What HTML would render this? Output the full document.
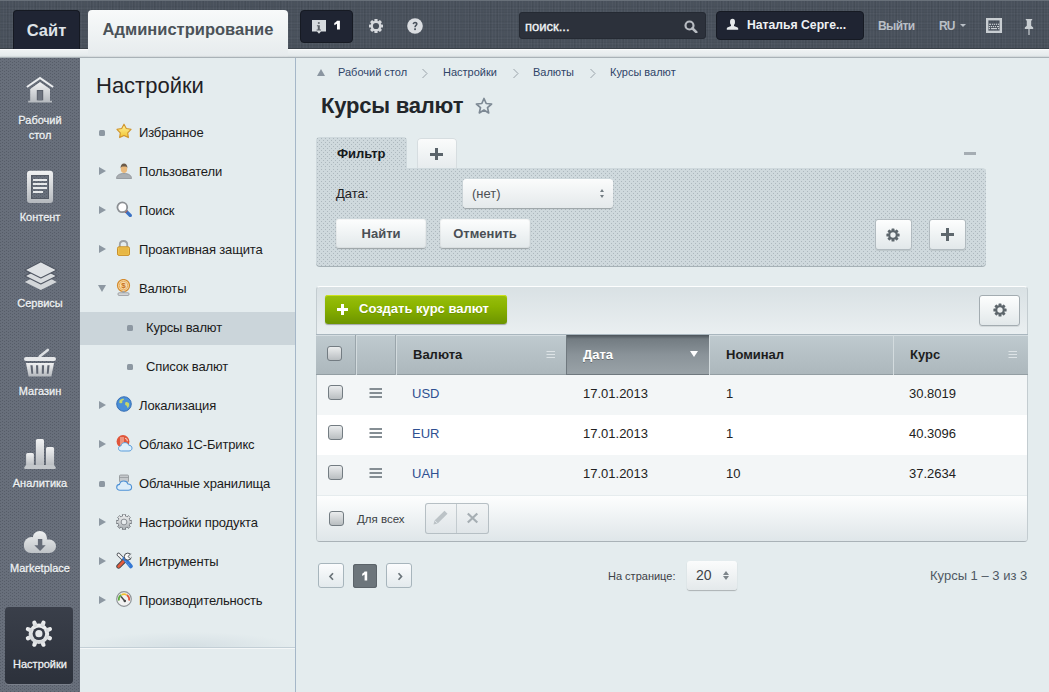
<!DOCTYPE html>
<html><head><meta charset="utf-8">
<style>
*{margin:0;padding:0;box-sizing:border-box}
html,body{width:1049px;height:692px;overflow:hidden;font-family:"Liberation Sans",sans-serif;background:#e4ebed}
.a{position:absolute}
#top{left:0;top:0;width:1049px;height:49px;background:#49515c;
 background-image:repeating-linear-gradient(90deg,rgba(255,255,255,.03) 0 1px,transparent 1px 3px),repeating-linear-gradient(90deg,rgba(0,0,0,.05) 0 1px,transparent 1px 7px),repeating-linear-gradient(0deg,rgba(0,0,0,.04) 0 1px,transparent 1px 3px),repeating-linear-gradient(0deg,rgba(255,255,255,.025) 0 1px,transparent 1px 5px);
 border-top:1px solid #687079;box-shadow:inset 0 -1px 0 #3a4149}
#strip{left:0;top:49px;width:1049px;height:8px;background:linear-gradient(#fafbfc 0 1px,#eef2f3 1px,#e3e9eb)}
.tabsite{left:13px;top:10px;width:67px;height:39px;background:#1f2433;border:1px solid #151922;border-bottom:none;border-radius:4px 4px 0 0;color:#dfe3e8;font-weight:bold;font-size:16.5px;text-align:center;line-height:39px}
.tabadm{left:88px;top:10px;width:200px;height:47px;background:linear-gradient(#f8fafa,#e6ebed);border-radius:4px 4px 0 0;color:#4b5258;font-weight:bold;font-size:16.5px;text-align:center;line-height:39px}
.dbtn{background:#1f2432;border-radius:4px;border:1px solid #161a23}
#side{left:0;top:58px;width:80px;height:634px;background:#686f7b;
 background-image:radial-gradient(circle at 2.5px .5px,rgba(40,45,55,.28) .6px,transparent .9px),radial-gradient(circle at .5px 1.5px,rgba(40,45,55,.28) .6px,transparent .9px);background-size:4px 3px}
#menu{left:80px;top:58px;width:216px;height:634px;background:#e4ecee;border-right:1px solid #a5b7c8}
#main{left:296px;top:58px;width:753px;height:634px;background:#e4ecee}
.si{position:absolute;left:0;width:80px;text-align:center;color:#eef1f3;font-size:11px;line-height:15px;-webkit-text-stroke:.3px #eef1f3;text-shadow:0 1px 1px rgba(0,0,0,.25)}
.mi{position:absolute;left:139px;font-size:13px;color:#1b1b1b;white-space:nowrap;letter-spacing:-.15px}
.bul{position:absolute;left:99px;width:6px;height:6px;border-radius:1.5px;background:#8d98a2}
.arr{position:absolute;left:99px;width:0;height:0;border-left:7px solid #8d98a2;border-top:4.5px solid transparent;border-bottom:4.5px solid transparent}
.arrd{position:absolute;left:98px;width:0;height:0;border-top:7px solid #8d98a2;border-left:4.5px solid transparent;border-right:4.5px solid transparent}
.bc{position:absolute;top:65px;font-size:11px;color:#2f4468;white-space:nowrap}
.lbtn{position:absolute;background:linear-gradient(#fdfefe,#e2e8ea);border-radius:3px;box-shadow:0 1px 1px rgba(0,0,0,.25),inset 0 0 0 1px rgba(0,0,0,.04);font-weight:bold;font-size:13px;color:#4a4f55;text-align:center}
.cb{position:absolute;width:15px;height:15px;border-radius:3px;border:1px solid #737c82;background:linear-gradient(#ebedee,#b9bec1)}
.cell{position:absolute;font-size:13px;color:#222;white-space:nowrap}
.hdr{position:absolute;font-size:13px;font-weight:bold;color:#1d1d1d;white-space:nowrap}
</style></head><body>
<div id="top" class="a"></div>
<div id="strip" class="a"></div>
<div class="a tabsite">Сайт</div>
<div class="a tabadm">Администрирование</div>
<div class="a" style="left:0;top:57px;width:1049px;height:1px;background:#a9b2b7;box-shadow:0 -1px 1px rgba(0,0,0,.08)"></div>
<!-- notifications -->
<div class="a dbtn" style="left:300px;top:10px;width:53px;height:33px"></div>
<svg class="a" style="left:311px;top:19px" width="16" height="16" viewBox="0 0 16 16"><path d="M1 1h14v11.5H10l-2 2.3-2-2.3H1z" fill="#d6dade"/><rect x="6.9" y="3.2" width="1.8" height="1.6" fill="#5b6067"/><path d="M5.9 6.2h2.9v4.3h1.2v1.1H5.6v-1.1h1.2V7.3h-.9z" fill="#5b6067"/></svg>
<svg class="a" style="left:333px;top:20px" width="8" height="10" viewBox="0 0 8 10"><path d="M4 .8h2.9v8.8H4V3.8c-.8.7-1.6 1.1-2.7 1.4V3C2.6 2.5 3.5 1.7 4 .8z" fill="#fff"/></svg>
<!-- gear -->
<svg class="a" style="left:368px;top:18px" width="16" height="16" viewBox="-8 -8 16 16"><g fill="#d6d9dd"><circle r="5.3"/><g id="tt"><rect x="-1.6" y="-7" width="3.2" height="3" rx=".6"/></g><use href="#tt" transform="rotate(45)"/><use href="#tt" transform="rotate(90)"/><use href="#tt" transform="rotate(135)"/><use href="#tt" transform="rotate(180)"/><use href="#tt" transform="rotate(225)"/><use href="#tt" transform="rotate(270)"/><use href="#tt" transform="rotate(315)"/></g><circle r="3.1" fill="#49515c"/></svg>
<!-- help -->
<svg class="a" style="left:407px;top:18px" width="16" height="16" viewBox="0 0 16 16"><circle cx="8" cy="8" r="7.8" fill="#dadde1"/><path d="M5.6 6.1c0-1.5 1.1-2.4 2.5-2.4s2.5.9 2.5 2.2c0 1.6-1.8 1.8-1.8 3.3H7.3c0-1.9 1.6-2.1 1.6-3.1 0-.5-.3-.9-.9-.9-.6 0-.9.4-.9 1z" fill="#49515c"/><rect x="7.2" y="10.3" width="1.7" height="1.8" fill="#49515c"/></svg>
<!-- search -->
<div class="a" style="left:519px;top:12px;width:187px;height:27px;background:#2c313b;border-radius:3px;border:1px solid #252a33"></div>
<div class="a" style="left:525px;top:19px;font-size:13px;line-height:15px;color:#f2f4f6;-webkit-text-stroke:.35px #f2f4f6">поиск...</div>
<svg class="a" style="left:684px;top:20px" width="14" height="13" viewBox="0 0 14 13"><circle cx="5.5" cy="5.5" r="4" fill="none" stroke="#b8bcc2" stroke-width="2.2"/><path d="M8.3 8.3l4 3.8" stroke="#b8bcc2" stroke-width="2.6" stroke-linecap="round"/></svg>
<!-- user -->
<div class="a dbtn" style="left:716px;top:11px;width:148px;height:29px"></div>
<svg class="a" style="left:726px;top:18px" width="13" height="13" viewBox="0 0 13 13"><ellipse cx="6.5" cy="3.9" rx="2.5" ry="3.2" fill="#e6e9eb"/><path d="M5 6h3v2l3.6 1.6c.4.2.6.5.6.9v1.3H.8v-1.3c0-.4.2-.7.6-.9L5 8z" fill="#e6e9eb"/></svg>
<div class="a" style="left:747px;top:18px;font-size:12.2px;line-height:14px;color:#eef1f4;font-weight:bold">Наталья Серге...</div>
<div class="a" style="left:878px;top:19px;font-size:12px;line-height:14px;color:#b9bfc6;font-weight:bold;letter-spacing:-0.6px">Выйти</div>
<div class="a" style="left:939px;top:19px;font-size:12px;line-height:14px;color:#b9bfc6;font-weight:bold;letter-spacing:-0.8px">RU</div>
<div class="a" style="left:960px;top:24px;width:0;height:0;border-top:3px solid #b9bfc6;border-left:3px solid transparent;border-right:3px solid transparent"></div>
<svg class="a" style="left:986px;top:18px" width="16" height="15" viewBox="0 0 16 15"><rect x="1.2" y="1.2" width="13.6" height="12.6" fill="none" stroke="#c9ced2" stroke-width="2.4"/><g fill="#c9ced2"><rect x="3.1" y="5.7" width="2" height="1.2"/><rect x="6" y="5.7" width="1.2" height="1.2"/><rect x="8" y="5.7" width="1.2" height="1.2"/><rect x="10" y="5.7" width="1.2" height="1.2"/><rect x="12" y="5.7" width="1.2" height="1.2"/><rect x="2.8" y="8" width="1.2" height="1.2"/><rect x="4.8" y="8" width="1.2" height="1.2"/><rect x="6.8" y="8" width="1.2" height="1.2"/><rect x="8.8" y="8" width="1.2" height="1.2"/><rect x="11" y="8" width="2" height="1.2"/><rect x="2.8" y="10" width="1.2" height="1.2"/><rect x="5" y="10" width="6" height="1.2"/><rect x="12" y="10" width="1.2" height="1.2"/></g></svg>
<svg class="a" style="left:1024px;top:19px" width="10" height="16" viewBox="0 0 10 16"><path d="M1.8 0h6.4v1L7.2 1.8v5L9.2 8.6V10H.8V8.6l2-1.8v-5L1.8 1z" fill="#c9ced2"/><rect x="4.4" y="10" width="1.2" height="6" fill="#c9ced2"/></svg>
<div id="side" class="a"></div>
<svg width="0" height="0" style="position:absolute"><defs>
<linearGradient id="ig" x1="0" y1="0" x2="0" y2="1"><stop offset="0" stop-color="#f1f2f3"/><stop offset="1" stop-color="#b4b8bd"/></linearGradient>
</defs></svg>
<!-- house -->
<svg class="a" style="left:20px;top:70px" width="40" height="40" viewBox="0 0 40 40"><path d="M6.3 16.2L20 6.8l13.7 9.4-1.2 1.6L20 9.3 7.5 17.8z" fill="#eceef0"/><path d="M10.2 19L20 12l10 7v11.8h2v1.8H8.2v-1.8h2z" fill="url(#ig)"/><rect x="16.8" y="20" width="6.4" height="10.3" fill="#5a606b"/><rect x="17.8" y="21" width="4.4" height="9.3" fill="#6d737e"/></svg>
<div class="si" style="top:113px;line-height:15px">Рабочий<br>стол</div>
<!-- content -->
<svg class="a" style="left:20px;top:165px" width="40" height="40" viewBox="0 0 40 40"><path fill-rule="evenodd" d="M10 5.8h20a3 3 0 0 1 3 3V35a3 3 0 0 1-3 3H10a3 3 0 0 1-3-3V8.8a3 3 0 0 1 3-3zM11 10v24h18V10z" fill="url(#ig)"/><rect x="11.5" y="10.5" width="17" height="23" fill="none" stroke="#555b66" stroke-width="1"/><g fill="#e6e8ea"><rect x="13" y="14" width="14" height="2"/><rect x="13" y="18" width="14" height="2"/><rect x="13" y="22" width="14" height="2"/><rect x="13" y="26" width="10" height="2"/></g></svg>
<div class="si" style="top:210px">Контент</div>
<!-- services (layers) -->
<svg class="a" style="left:20px;top:255px" width="40" height="40" viewBox="0 0 40 40"><path d="M4.8 26.9L20.8 18.7 36.9 26.9 20.8 35z" fill="#d3d6d9"/><path d="M4.8 20.9L20.8 12.7 36.9 20.9 20.8 29z" fill="#d9dcdf" stroke="#515763" stroke-width="1.1" stroke-linejoin="round"/><path d="M4.8 14.9L20.8 6.7 36.9 14.9 20.8 23z" fill="#dfe2e5" stroke="#515763" stroke-width="1.1" stroke-linejoin="round"/></svg>
<div class="si" style="top:296px">Сервисы</div>
<!-- basket -->
<svg class="a" style="left:20px;top:342px" width="40" height="40" viewBox="0 0 40 40"><path d="M19.7 14.6L27.8 7.9" stroke="#dde0e3" stroke-width="2.6" stroke-linecap="round"/><rect x="4" y="15" width="32" height="4" rx="2" fill="#e6e8ea"/><path d="M6 21h28l-2.6 13.6H8.6z" fill="url(#ig)"/><g fill="#5f6571"><path d="M10.4 23.3h2.2l.6 8.4h-1.8z"/><path d="M16 23.3h2.2l.1 8.4h-2z"/><path d="M21.9 23.3h2.2l-.3 8.4h-2z"/><path d="M27.4 23.3h2.2l-1 8.4h-1.8z"/></g></svg>
<div class="si" style="top:384px">Магазин</div>
<!-- chart -->
<svg class="a" style="left:20px;top:432px" width="40" height="40" viewBox="0 0 40 40"><rect x="6.1" y="21" width="7.8" height="14" rx="1.6" fill="url(#ig)"/><rect x="15.9" y="6.9" width="8.1" height="28" rx="1.6" fill="url(#ig)"/><rect x="26" y="15" width="8.1" height="20" rx="1.6" fill="url(#ig)"/><path d="M6 33h28l1.8 2.6c.2.8-.2 1.4-1 1.4H5.2c-.8 0-1.2-.6-1-1.4z" fill="#c3c7cb"/></svg>
<div class="si" style="top:476px">Аналитика</div>
<!-- cloud -->
<svg class="a" style="left:20px;top:522px" width="40" height="40" viewBox="0 0 40 40"><defs><linearGradient id="cg" gradientUnits="userSpaceOnUse" x1="0" y1="9" x2="0" y2="31"><stop offset="0" stop-color="#eef0f1"/><stop offset="1" stop-color="#bfc3c7"/></linearGradient></defs><g fill="url(#cg)"><rect x="4" y="17.5" width="32" height="13.5" rx="6.75"/><circle cx="19.8" cy="16.2" r="7.2"/><circle cx="11.6" cy="22.6" r="7.6"/></g><path d="M17.9 17h4.4v6.2h3.4L20.1 29l-5.8-5.8h3.6z" fill="#666c78"/></svg>
<div class="si" style="top:561px">Marketplace</div>
<!-- active settings -->
<div class="a" style="left:5px;top:607px;width:68px;height:77px;border-radius:4px;background:linear-gradient(#3a3f4a,#2c313b);box-shadow:0 1px 0 rgba(255,255,255,.12)"></div>
<svg class="a" style="left:24px;top:619px" width="30" height="30" viewBox="-15 -15 30 30"><defs><g id="gt"><rect x="-2.1" y="-14" width="4.2" height="6.5" rx="2.1"/></g><linearGradient id="gg" x1="0" y1="0" x2="0" y2="1"><stop offset="0" stop-color="#f3f4f5"/><stop offset="1" stop-color="#d2d5d8"/></linearGradient></defs><g fill="url(#gg)" transform="translate(-.1 -.3) rotate(22.5)"><circle r="10.2"/><use href="#gt"/><use href="#gt" transform="rotate(45)"/><use href="#gt" transform="rotate(90)"/><use href="#gt" transform="rotate(135)"/><use href="#gt" transform="rotate(180)"/><use href="#gt" transform="rotate(225)"/><use href="#gt" transform="rotate(270)"/><use href="#gt" transform="rotate(315)"/></g><circle cx="-.1" cy="-.3" r="6.3" fill="#363b47"/><circle cx="-.1" cy="-.3" r="3.6" fill="#e6e8ea"/></svg>
<div class="si" style="top:657px">Настройки</div>
<div id="menu" class="a"></div>
<div class="a" style="left:80px;top:312px;width:215px;height:33px;background:#cbd5da"></div>
<div class="a" style="left:80px;top:632px;width:215px;height:15px;background:radial-gradient(ellipse 50% 100% at 50% 100%,rgba(150,170,185,.2),rgba(150,170,185,0))"></div>
<div class="a" style="left:80px;top:647px;width:215px;height:1px;background:#c3cfd6"></div>
<div class="a" style="left:80px;top:648px;width:215px;height:1px;background:#f4f7f8"></div>
<div class="a" style="left:96px;top:73px;font-size:22px;line-height:26px;color:#1f2226">Настройки</div>

<div class="bul" style="top:130px"></div>
<div class="arr" style="top:167px"></div>
<div class="arr" style="top:206px"></div>
<div class="arr" style="top:245px"></div>
<div class="arrd" style="top:285px"></div>
<div class="bul" style="left:127px;top:325px"></div>
<div class="bul" style="left:127px;top:364px"></div>
<div class="arr" style="top:401px"></div>
<div class="arr" style="top:440px"></div>
<div class="bul" style="top:481px"></div>
<div class="arr" style="top:518px"></div>
<div class="arr" style="top:557px"></div>
<div class="arr" style="top:596px"></div>

<div class="mi" style="top:124.6px">Избранное</div>
<div class="mi" style="top:163.6px">Пользователи</div>
<div class="mi" style="top:202.6px">Поиск</div>
<div class="mi" style="top:241.6px">Проактивная защита</div>
<div class="mi" style="top:280.6px">Валюты</div>
<div class="mi" style="left:146px;top:319.6px">Курсы валют</div>
<div class="mi" style="left:146px;top:358.6px">Список валют</div>
<div class="mi" style="top:397.6px">Локализация</div>
<div class="mi" style="top:436.6px">Облако 1С-Битрикс</div>
<div class="mi" style="top:475.6px">Облачные хранилища</div>
<div class="mi" style="top:514.6px">Настройки продукта</div>
<div class="mi" style="top:553.6px">Инструменты</div>
<div class="mi" style="top:592.6px">Производительность</div>

<!-- menu icons -->
<svg class="a" style="left:116px;top:123px" width="16" height="16" viewBox="0 0 16 16"><defs><linearGradient id="sg" x1="0" y1="0" x2="0" y2="1"><stop offset="0" stop-color="#fff3a0"/><stop offset="1" stop-color="#f2c530"/></linearGradient></defs><path d="M8.00 1.20L10.29 5.44L15.04 6.31L11.71 9.81L12.35 14.59L8.00 12.50L3.65 14.59L4.29 9.81L0.96 6.31L5.71 5.44z" fill="url(#sg)" stroke="#d0932a" stroke-width="1.1" stroke-linejoin="round"/></svg>
<svg class="a" style="left:116px;top:163px" width="16" height="16" viewBox="0 0 16 16"><path d="M.5 15.5c0-3 2.5-5 7.5-5s7.5 2 7.5 5z" fill="#a9aeb2" stroke="#8c9196" stroke-width=".8"/><ellipse cx="8" cy="6" rx="3.2" ry="4" fill="#e9b97c"/><path d="M4.6 5.5C4.4 2.2 6 .6 8 .6s3.6 1.6 3.4 4.9L10.8 4C9.5 3.5 7 3.3 5.3 4z" fill="#6b5a48"/></svg>
<svg class="a" style="left:116px;top:201px" width="16" height="16" viewBox="0 0 16 16"><path d="M9.8 10l4.5 4.5" stroke="#3b72c4" stroke-width="3.2" stroke-linecap="round"/><path d="M9.4 9.6l1.3 1.3" stroke="#d04d2a" stroke-width="3" /><circle cx="6.3" cy="6.3" r="4.9" fill="#fff" stroke="#8b8f93" stroke-width="1.8"/></svg>
<svg class="a" style="left:116px;top:240px" width="15" height="16" viewBox="0 0 15 16"><path d="M3.8 7V4.6C3.8 2.3 5.4 1 7.5 1s3.7 1.3 3.7 3.6V7" fill="none" stroke="#9ea2a6" stroke-width="1.8"/><rect x="1.5" y="6.8" width="12" height="8.6" rx="1.5" fill="#f0c44e" stroke="#c88f2a" stroke-width="1"/><g stroke="#d9a53a" stroke-width=".8"><path d="M3 9h9M3 11h9M3 13h9"/></g></svg>
<svg class="a" style="left:116px;top:279px" width="15" height="17" viewBox="0 0 15 17"><circle cx="7.5" cy="6.5" r="6" fill="#f7d9a6" stroke="#d38a2e" stroke-width="1.2"/><circle cx="7.5" cy="6.5" r="4.2" fill="none" stroke="#e3a552" stroke-width=".8"/><text x="7.5" y="9.3" font-size="8" font-family="Liberation Sans" font-weight="bold" text-anchor="middle" fill="#c8731c">$</text><rect x="2" y="13.8" width="11" height="2.6" rx="1" fill="#d7dadc" stroke="#8d9195" stroke-width=".8"/><rect x="6.3" y="12" width="2.4" height="2" fill="#a0a4a8"/></svg>
<svg class="a" style="left:116px;top:396px" width="16" height="16" viewBox="0 0 16 16"><circle cx="8" cy="8" r="7.3" fill="#4a8fd8" stroke="#2f68b0" stroke-width=".9"/><path d="M3.5 4.5c1.2-1.5 3-2 4.5-1.8.3.8-.5 1.6-1.5 1.8-.6.8.4 1.8-.6 2.6-.9.4-1.6-.5-2.6-.1zM9.5 6c1.3-.2 2.8.3 3.6 1.5.4 1.6-.2 3.3-1.3 4.4-.8-.4-.5-1.6-1.3-2.2-.9-.5-1.6-.9-1.4-1.9.1-.7.6-1.3.4-1.8z" fill="#c6d66a"/></svg>
<svg class="a" style="left:116px;top:434px" width="17" height="18" viewBox="0 0 17 18"><circle cx="7" cy="7.5" r="6.4" fill="#e0553a"/><path d="M5 3v8.5M7 3v8.5" stroke="#f5c9b8" stroke-width="1.1"/><path d="M9 4.2c1.7.4 2.4 1.5 2.4 3" fill="none" stroke="#f5c9b8" stroke-width="1.1"/><path d="M5.5 17c-2 0-3-1.2-3-2.6s1-2.5 2.5-2.6C5.4 9.8 7 8.6 9 8.6c1.8 0 3.2 1 3.7 2.6 1.9 0 3.3 1.3 3.3 2.9 0 1.7-1.3 2.9-3 2.9z" fill="#dff0fb" stroke="#5a9ddb" stroke-width="1"/></svg>
<svg class="a" style="left:116px;top:474px" width="17" height="17" viewBox="0 0 17 17"><rect x="3.5" y="1" width="9" height="7" rx="1" fill="#c5c9cc" stroke="#8d9296" stroke-width=".8"/><path d="M3.5 3.5h9" stroke="#8d9296" stroke-width=".7"/><path d="M4 16.3c-2 0-3.3-1.3-3.3-3s1.2-2.8 2.8-2.9c.4-2 2-3.4 4.3-3.4 2 0 3.7 1.2 4.2 3 2.1.1 3.6 1.5 3.6 3.3 0 1.8-1.4 3-3.3 3z" fill="#dcedf9" stroke="#4f92d6" stroke-width="1.1"/></svg>
<svg class="a" style="left:116px;top:514px" width="16" height="16" viewBox="0 0 16 16"><defs><linearGradient id="mg" x1="0" y1="0" x2="0" y2="1"><stop offset="0" stop-color="#f2f3f4"/><stop offset="1" stop-color="#a9aeb2"/></linearGradient></defs><path d="M8.00 0.30L8.27 0.30L8.54 0.32L8.80 0.34L9.07 0.37L9.34 0.42L9.60 0.47L9.45 2.18L9.65 2.23L9.85 2.29L10.05 2.36L10.25 2.44L10.44 2.52L10.63 2.61L10.82 2.70L11.00 2.80L11.18 2.91L12.31 1.62L12.53 1.77L12.74 1.93L12.95 2.10L13.15 2.28L13.35 2.46L13.54 2.65L13.72 2.85L13.90 3.05L14.07 3.26L14.23 3.47L14.38 3.69L13.09 4.82L13.20 5.00L13.30 5.18L13.39 5.37L13.48 5.56L13.56 5.75L13.64 5.95L13.71 6.15L13.77 6.35L13.82 6.55L15.53 6.40L15.58 6.66L15.63 6.93L15.66 7.20L15.68 7.46L15.70 7.73L15.70 8.00L15.70 8.27L15.68 8.54L15.66 8.80L15.63 9.07L15.58 9.34L15.53 9.60L13.82 9.45L13.77 9.65L13.71 9.85L13.64 10.05L13.56 10.25L13.48 10.44L13.39 10.63L13.30 10.82L13.20 11.00L13.09 11.18L14.38 12.31L14.23 12.53L14.07 12.74L13.90 12.95L13.72 13.15L13.54 13.35L13.35 13.54L13.15 13.72L12.95 13.90L12.74 14.07L12.53 14.23L12.31 14.38L11.18 13.09L11.00 13.20L10.82 13.30L10.63 13.39L10.44 13.48L10.25 13.56L10.05 13.64L9.85 13.71L9.65 13.77L9.45 13.82L9.60 15.53L9.34 15.58L9.07 15.63L8.80 15.66L8.54 15.68L8.27 15.70L8.00 15.70L7.73 15.70L7.46 15.68L7.20 15.66L6.93 15.63L6.66 15.58L6.40 15.53L6.55 13.82L6.35 13.77L6.15 13.71L5.95 13.64L5.75 13.56L5.56 13.48L5.37 13.39L5.18 13.30L5.00 13.20L4.82 13.09L3.69 14.38L3.47 14.23L3.26 14.07L3.05 13.90L2.85 13.72L2.65 13.54L2.46 13.35L2.28 13.15L2.10 12.95L1.93 12.74L1.77 12.53L1.62 12.31L2.91 11.18L2.80 11.00L2.70 10.82L2.61 10.63L2.52 10.44L2.44 10.25L2.36 10.05L2.29 9.85L2.23 9.65L2.18 9.45L0.47 9.60L0.42 9.34L0.37 9.07L0.34 8.80L0.32 8.54L0.30 8.27L0.30 8.00L0.30 7.73L0.32 7.46L0.34 7.20L0.37 6.93L0.42 6.66L0.47 6.40L2.18 6.55L2.23 6.35L2.29 6.15L2.36 5.95L2.44 5.75L2.52 5.56L2.61 5.37L2.70 5.18L2.80 5.00L2.91 4.82L1.62 3.69L1.77 3.47L1.93 3.26L2.10 3.05L2.28 2.85L2.46 2.65L2.65 2.46L2.85 2.28L3.05 2.10L3.26 1.93L3.47 1.77L3.69 1.62L4.82 2.91L5.00 2.80L5.18 2.70L5.37 2.61L5.56 2.52L5.75 2.44L5.95 2.36L6.15 2.29L6.35 2.23L6.55 2.18L6.40 0.47L6.66 0.42L6.93 0.37L7.20 0.34L7.46 0.32L7.73 0.30z" fill="url(#mg)" stroke="#6f7479" stroke-width=".9" stroke-linejoin="round"/><circle cx="8" cy="8" r="2.9" fill="#e8ecee" stroke="#8a8f94" stroke-width="1"/></svg>
<svg class="a" style="left:116px;top:552px" width="17" height="17" viewBox="0 0 17 17"><path d="M2.5 2.5l5.5 5.5" stroke="#4a4f54" stroke-width="3.6" stroke-linecap="round"/><path d="M2.5 2.5l5.5 5.5" stroke="#fafafa" stroke-width="2" stroke-linecap="round"/><path d="M8.5 8.5L2.6 14.4" stroke="#3f4448" stroke-width="4.6" stroke-linecap="round"/><path d="M8.2 8.8L2.6 14.4" stroke="#e35b3d" stroke-width="2.8" stroke-linecap="round"/><path d="M8.5 6.5l6.3 7.8" stroke="#3478d4" stroke-width="4" stroke-linecap="round"/><path d="M9.2 9l4.5 5" stroke="#8cb8ec" stroke-width=".7" stroke-dasharray="1 1"/><circle cx="11.8" cy="4.6" r="3.5" fill="#fafafa" stroke="#4a4f54" stroke-width="1"/><path d="M12 4.5l2.8-2.8 2 2-2.8 2.8z" fill="#e4eaec"/><path d="M12 4.5l2.8-2.8M12 4.5l2.8 2.6" stroke="#4a4f54" stroke-width=".9"/></svg>
<svg class="a" style="left:116px;top:591px" width="16" height="16" viewBox="0 0 16 16"><circle cx="8" cy="8" r="7.3" fill="#f2f2f2" stroke="#8e9296" stroke-width="1.2"/><path d="M3 9.5A5.2 5.2 0 0 1 5.2 4" fill="none" stroke="#5bab3c" stroke-width="1.8"/><path d="M5.5 3.8A5.2 5.2 0 0 1 10.6 3.8" fill="none" stroke="#f0c030" stroke-width="1.8"/><path d="M10.8 4A5.2 5.2 0 0 1 13 9.5" fill="none" stroke="#e0553a" stroke-width="1.8"/><path d="M5 5.5l4.2 5" stroke="#444" stroke-width="1.4"/><circle cx="8.8" cy="10" r="1.2" fill="#444"/></svg>
<div id="main" class="a"></div>
<!-- breadcrumbs -->
<div class="a" style="left:317px;top:69px;width:0;height:0;border-bottom:7px solid #8a95a0;border-left:4.5px solid transparent;border-right:4.5px solid transparent"></div>
<div class="bc" style="left:338px;top:65.7px">Рабочий стол</div>
<div class="bc" style="left:443px;top:65.7px">Настройки</div>
<div class="bc" style="left:533px;top:65.7px">Валюты</div>
<div class="bc" style="left:610px;top:65.7px">Курсы валют</div>
<svg class="a" style="left:421px;top:68px" width="8" height="11"><path d="M1.5 1l4.5 4.5-4.5 4.5" fill="none" stroke="#9aa3aa" stroke-width="1"/></svg>
<svg class="a" style="left:512px;top:68px" width="8" height="11"><path d="M1.5 1l4.5 4.5-4.5 4.5" fill="none" stroke="#9aa3aa" stroke-width="1"/></svg>
<svg class="a" style="left:589px;top:68px" width="8" height="11"><path d="M1.5 1l4.5 4.5-4.5 4.5" fill="none" stroke="#9aa3aa" stroke-width="1"/></svg>
<!-- title -->
<div class="a" style="left:321px;top:93px;font-size:22px;line-height:26px;font-weight:bold;color:#22262a;letter-spacing:-.2px">Курсы валют</div>
<svg class="a" style="left:475px;top:97px" width="18" height="18" viewBox="0 0 18 18"><path d="M9 1.5l2.2 5 5.4.5-4.1 3.6 1.2 5.3L9 13.1l-4.7 2.8 1.2-5.3L1.4 7l5.4-.5z" fill="none" stroke="#7d8994" stroke-width="1.7" stroke-linejoin="round"/></svg>
<!-- filter -->
<div class="a" style="left:316px;top:137px;width:91px;height:32px;border-radius:4px 4px 0 0;background-color:#cfd9dd;background-image:radial-gradient(circle at 1.5px 1.5px,rgba(120,132,140,.38) .6px,transparent .9px),radial-gradient(circle at 3.5px 3.5px,rgba(120,132,140,.38) .6px,transparent .9px);background-size:4px 4px"></div>
<div class="a" style="left:417px;top:137.5px;width:40px;height:31px;border-radius:4px 4px 0 0;background:linear-gradient(#fbfcfc,#e6ebed);box-shadow:inset 0 0 0 1px #d6dde0"></div>
<div class="a" style="left:430px;top:148px;width:13px;height:12px"><div class="a" style="left:0;top:5px;width:13px;height:2.6px;background:#5b646b"></div><div class="a" style="left:5.2px;top:0;width:2.6px;height:12px;background:#5b646b"></div></div>
<div class="a" style="left:316px;top:168px;width:670px;height:98px;border-radius:0 4px 4px 4px;background-color:#cfd9dd;background-image:radial-gradient(circle at 1.5px 1.5px,rgba(120,132,140,.38) .6px,transparent .9px),radial-gradient(circle at 3.5px 3.5px,rgba(120,132,140,.38) .6px,transparent .9px);background-size:4px 4px;box-shadow:0 1px 0 #a6b1b6"></div>
<div class="a" style="left:337px;top:146.2px;font-size:13px;line-height:15px;font-weight:bold;color:#16191c">Фильтр</div>
<div class="a" style="left:964px;top:152px;width:12px;height:3px;background:#a5adb3"></div>
<div class="a" style="left:336px;top:185.9px;font-size:13px;line-height:15px;color:#1d2024">Дата:</div>
<div class="a" style="left:463px;top:179px;width:150px;height:29px;border-radius:3px;background:linear-gradient(#fbfcfc,#e4e9eb);box-shadow:0 1px 1px rgba(0,0,0,.25)"></div>
<div class="a" style="left:472px;top:186px;font-size:13px;line-height:15px;color:#4d5054">(нет)</div>
<div class="a" style="left:599.6px;top:188.5px;width:0;height:0;border-bottom:3.5px solid #737d83;border-left:2.8px solid transparent;border-right:2.8px solid transparent"></div>
<div class="a" style="left:599.6px;top:195px;width:0;height:0;border-top:3.5px solid #737d83;border-left:2.8px solid transparent;border-right:2.8px solid transparent"></div>
<div class="lbtn" style="left:336px;top:219px;width:90px;height:29px;line-height:29px">Найти</div>
<div class="lbtn" style="left:440px;top:219px;width:90px;height:29px;line-height:29px">Отменить</div>
<div class="lbtn" style="left:875px;top:219px;width:37px;height:31px;border:1px solid #b1babf;box-shadow:0 1px 0 rgba(0,0,0,.08)"></div>
<div class="lbtn" style="left:929px;top:219px;width:37px;height:31px;border:1px solid #b1babf;box-shadow:0 1px 0 rgba(0,0,0,.08)"></div>
<svg class="a" style="left:886px;top:228px" width="14" height="14" viewBox="-7 -7 14 14"><defs><g id="ft"><rect x="-1.5" y="-6.6" width="3" height="2.8" rx=".6"/></g></defs><g fill="#5d666c"><circle r="4.7"/><use href="#ft"/><use href="#ft" transform="rotate(45)"/><use href="#ft" transform="rotate(90)"/><use href="#ft" transform="rotate(135)"/><use href="#ft" transform="rotate(180)"/><use href="#ft" transform="rotate(225)"/><use href="#ft" transform="rotate(270)"/><use href="#ft" transform="rotate(315)"/></g><circle r="2.7" fill="#eef1f2"/></svg>
<div class="a" style="left:941px;top:228px;width:13px;height:13px"><div class="a" style="left:0;top:5.3px;width:13px;height:2.4px;background:#5e676d"></div><div class="a" style="left:5.3px;top:0;width:2.4px;height:13px;background:#5e676d"></div></div>

<!-- list -->
<div class="a" style="left:316px;top:286px;width:712px;height:256px;border-radius:4px;background:linear-gradient(#d9e1e4,#eaeff1 48px);border:1px solid #c3ccd0;border-top-color:#fdfefe;border-bottom-color:#a9b2b7"></div>
<div class="a" style="left:325px;top:295px;width:182px;height:29px;border-radius:3px;background:linear-gradient(#98bf0c,#8ab300 40%,#6c9400);box-shadow:inset 0 1px 0 #cde31c,0 1px 1px rgba(0,0,0,.3)"></div>
<div class="a" style="left:337px;top:304px;width:11px;height:11px"><div class="a" style="left:0;top:4px;width:11px;height:3.2px;background:#fff"></div><div class="a" style="left:3.9px;top:0;width:3.2px;height:11px;background:#fff"></div></div>
<div class="a" style="left:359px;top:301px;font-size:13px;line-height:15px;font-weight:bold;color:#fff;text-shadow:0 1px 0 rgba(0,0,0,.15)">Создать курс валют</div>
<div class="lbtn" style="left:979px;top:295px;width:41px;height:31px;border:1px solid #a3acb1;box-shadow:0 1px 0 rgba(0,0,0,.08)"></div>
<svg class="a" style="left:993px;top:303px" width="14" height="14" viewBox="-7 -7 14 14"><g fill="#5d666c"><circle r="4.7"/><use href="#ft"/><use href="#ft" transform="rotate(45)"/><use href="#ft" transform="rotate(90)"/><use href="#ft" transform="rotate(135)"/><use href="#ft" transform="rotate(180)"/><use href="#ft" transform="rotate(225)"/><use href="#ft" transform="rotate(270)"/><use href="#ft" transform="rotate(315)"/></g><circle r="2.7" fill="#eef1f2"/></svg>

<!-- header -->
<div class="a" style="left:316px;top:334px;width:712px;height:41px;background:linear-gradient(#bfcacf,#acb7bc);border-top:1px solid #a9b6be;box-shadow:inset 0 1px 0 #d5dde1,inset 0 -1px 0 #939ea3"></div>
<div class="a" style="left:566px;top:335px;width:143px;height:40px;background:linear-gradient(#4b5359,#737c82 4px,#8a9399 50%,#9aa3a8);box-shadow:inset 1px 0 0 #6f787e,inset 0 -1px 0 #6f787e"></div>
<div class="a" style="left:355px;top:335px;width:1px;height:40px;background:#9aa5ab"></div><div class="a" style="left:356px;top:335px;width:1px;height:40px;background:#d3dbde"></div>
<div class="a" style="left:395px;top:335px;width:1px;height:40px;background:#9aa5ab"></div><div class="a" style="left:396px;top:335px;width:1px;height:40px;background:#d3dbde"></div>
<div class="a" style="left:709px;top:335px;width:1px;height:40px;background:#d3dbde"></div>
<div class="a" style="left:893px;top:335px;width:1px;height:40px;background:#d3dbde"></div>
<div class="cb" style="left:327px;top:346px"></div>
<div class="hdr" style="left:413px;top:347.3px">Валюта</div>
<div class="hdr" style="left:583px;top:347.3px;color:#fff;text-shadow:0 1px 0 rgba(0,0,0,.3)">Дата</div>
<div class="hdr" style="left:726px;top:347.3px">Номинал</div>
<div class="hdr" style="left:910px;top:347.3px">Курс</div>
<div class="a" style="left:690px;top:351px;width:0;height:0;border-top:6.5px solid #fff;border-left:4px solid transparent;border-right:4px solid transparent"></div>
<svg class="a" style="left:546px;top:350px" width="10" height="10"><path d="M.5 1.5h8.5M.5 4.5h8.5M.5 7.5h8.5" stroke="#dde3e6" stroke-width="1.2"/></svg>
<svg class="a" style="left:1008px;top:350px" width="10" height="10"><path d="M.5 1.5h8.5M.5 4.5h8.5M.5 7.5h8.5" stroke="#dde3e6" stroke-width="1.2"/></svg>

<!-- rows -->
<div class="a" style="left:317px;top:375px;width:710px;height:40px;background:#f3f6f7"></div>
<div class="a" style="left:317px;top:415px;width:710px;height:40px;background:#fff"></div>
<div class="a" style="left:317px;top:455px;width:710px;height:40px;background:#f3f6f7"></div>
<div class="cb" style="left:328px;top:385px"></div>
<div class="cb" style="left:328px;top:425px"></div>
<div class="cb" style="left:328px;top:465px"></div>
<svg class="a" style="left:369px;top:387px" width="13" height="12"><path d="M.5 2h12.5M.5 6h12.5M.5 10h12.5" stroke="#858e94" stroke-width="2"/></svg>
<svg class="a" style="left:369px;top:427px" width="13" height="12"><path d="M.5 2h12.5M.5 6h12.5M.5 10h12.5" stroke="#858e94" stroke-width="2"/></svg>
<svg class="a" style="left:369px;top:467px" width="13" height="12"><path d="M.5 2h12.5M.5 6h12.5M.5 10h12.5" stroke="#858e94" stroke-width="2"/></svg>
<div class="cell" style="left:412px;top:386.2px;color:#2f5091">USD</div>
<div class="cell" style="left:412px;top:426.2px;color:#2f5091">EUR</div>
<div class="cell" style="left:412px;top:466.2px;color:#2f5091">UAH</div>
<div class="cell" style="left:583px;top:386.2px">17.01.2013</div>
<div class="cell" style="left:583px;top:426.2px">17.01.2013</div>
<div class="cell" style="left:583px;top:466.2px">17.01.2013</div>
<div class="cell" style="left:726px;top:386.2px">1</div>
<div class="cell" style="left:726px;top:426.2px">1</div>
<div class="cell" style="left:726px;top:466.2px">10</div>
<div class="cell" style="left:909px;top:386.2px">30.8019</div>
<div class="cell" style="left:909px;top:426.2px">40.3096</div>
<div class="cell" style="left:909px;top:466.2px">37.2634</div>
<!-- footer -->
<div class="a" style="left:317px;top:495px;width:710px;height:46px;border-radius:0 0 3px 3px;background:linear-gradient(#fdfefe,#dfe6e9);border-top:1px solid #e6ecee"></div>
<div class="cb" style="left:329px;top:511px"></div>
<div class="a" style="left:357px;top:512.7px;font-size:11.5px;line-height:13px;color:#3b3f44">Для всех</div>
<div class="a" style="left:425px;top:503px;width:64px;height:31px;border-radius:3px;background:linear-gradient(#f3f5f6,#dfe5e8);box-shadow:inset 0 0 0 1px #b6bfc4"></div>
<div class="a" style="left:456px;top:504px;width:1px;height:29px;background:#c3cbcf"></div>
<svg class="a" style="left:432px;top:510px" width="17" height="16" viewBox="0 0 17 16"><path d="M1.5 14.5l1-4L12.5 .8l3 3-9.8 9.6z" fill="#bcc3c7"/><path d="M2.5 10.5l3.2 3" stroke="#e9eef0" stroke-width=".8"/></svg>
<svg class="a" style="left:466px;top:512px" width="13" height="12" viewBox="0 0 13 12"><path d="M1.8 1.5l9.5 9M11.3 1.5l-9.5 9" stroke="#a6aeb3" stroke-width="2.2"/></svg>

<!-- pager -->
<div class="lbtn" style="left:318px;top:563px;width:26px;height:25px;border:1px solid #a7b5bc;box-shadow:none;background:linear-gradient(#fbfcfd,#e3eaed)"></div>
<svg class="a" style="left:328px;top:572px" width="8" height="9"><path d="M5 1.2L2 4.5 5 7.8" fill="none" stroke="#6a7379" stroke-width="1.7"/></svg>
<div class="a" style="left:353px;top:564px;width:24px;height:24px;border-radius:3px;background:#6c757b;box-shadow:inset 0 0 0 1px #5b6369"></div><svg class="a" style="left:361px;top:571px" width="8" height="10" viewBox="0 0 8 10"><path d="M3.6 .6h2.6v8.8H3.6V3.6c-.7.6-1.5 1-2.4 1.3V2.8C2.3 2.4 3.1 1.6 3.6.6z" fill="#fff"/></svg>
<div class="lbtn" style="left:386px;top:563px;width:26px;height:25px;border:1px solid #a7b5bc;box-shadow:none;background:linear-gradient(#fbfcfd,#e3eaed)"></div>
<svg class="a" style="left:396px;top:572px" width="8" height="9"><path d="M2.5 1.2L5.5 4.5 2.5 7.8" fill="none" stroke="#6a7379" stroke-width="1.7"/></svg>
<div class="a" style="left:608px;top:569.9px;font-size:11px;line-height:13px;color:#3d4247">На странице:</div>
<div class="a" style="left:687px;top:561px;width:50px;height:29px;border-radius:3px;background:linear-gradient(#fbfcfc,#e4e9eb);box-shadow:0 1px 1px rgba(0,0,0,.25)"></div>
<div class="a" style="left:696px;top:567.3px;font-size:14px;line-height:16px;color:#3f4348">20</div>
<div class="a" style="left:722.5px;top:570.5px;width:0;height:0;border-bottom:4px solid #7d858a;border-left:3px solid transparent;border-right:3px solid transparent"></div>
<div class="a" style="left:722.5px;top:576px;width:0;height:0;border-top:4px solid #7d858a;border-left:3px solid transparent;border-right:3px solid transparent"></div>
<div class="a" style="left:930px;top:567.8px;font-size:13px;line-height:15px;color:#4f5964">Курсы 1 – 3 из 3</div>
</body></html>
